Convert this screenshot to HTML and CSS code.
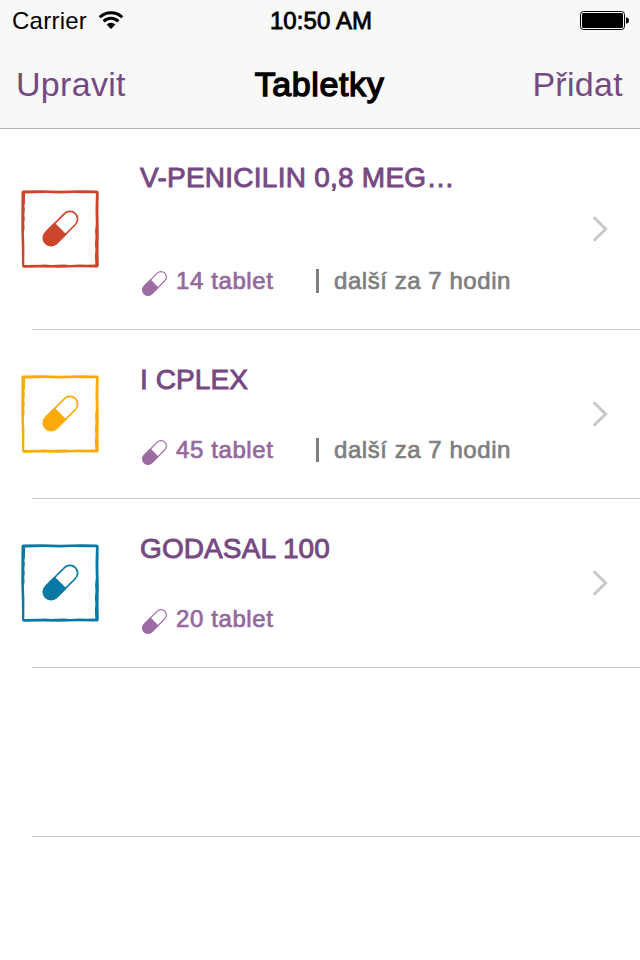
FILE: index.html
```html
<!DOCTYPE html>
<html lang="cs">
<head>
  <meta charset="UTF-8">
  <meta name="viewport" content="width=device-width, initial-scale=1.0">
  <title>Tabletky</title>
  <link rel="stylesheet" href="styles.css">
</head>
<body>
  <!-- shared icons -->
  <svg class="defs" width="0" height="0">
    <symbol id="pill" viewBox="0 0 40 40">
      <g transform="rotate(45 20 20)">
        <rect x="12.1" y="-1.6" width="15.8" height="43.2" rx="7.9" fill="none" stroke="currentColor" stroke-width="1.7"/>
        <path d="M11.3 20h17.4v13.5a8.7 8.7 0 0 1-17.4 0z" fill="currentColor"/>
      </g>
    </symbol>
    <symbol id="frame" viewBox="0 0 78 78">
      <path d="M.5 2.4Q.5 .5 2.5 .6L20 .3 39 .7 60 .3 75.5 .4Q77.8.4 77.7 3L77.4 22 77.8 42 77.5 60 77.8 75Q77.8 77.7 75 77.6L56 77.3 38 77.8 20 77.4 3 77.8Q.9 77.8 1 75L.8 56 .3 38 .4 20zM4.1 3.6L3.9 14 3.3 16 3.9 19 3.3 25 3.8 29 3.2 33 3.6 38 2.9 42 3.4 56 3.3 75 20 74.8 24 74.4 30 74.9 43 74.5 49 74.9 58 74.5 66 74.8 74.3 74.4 73.9 66 74.4 60 73.9 54 74.5 47 74.1 41 74.8 34 74.5 20 74.9 3.2 60 3.3 52 2.9 38 3.4 25 3.1z" fill="currentColor" fill-rule="evenodd"/>
    </symbol>
    <symbol id="chevron" viewBox="0 0 16 26">
      <path d="M1.7 1.3L13.6 13 1.7 24.7" fill="none" stroke="currentColor" stroke-width="3"/>
    </symbol>
  </svg>

  <div class="header">
    <div class="status">
      <div class="carrier">
        <span>Carrier</span>
        <svg class="wifi" width="26" height="20" viewBox="0 0 26 20">
          <g fill="none" stroke="#000" stroke-width="3">
            <path d="M1.7 7.3a16 16 0 0 1 22.6 0"/>
            <path d="M5.6 11.4a10.4 10.4 0 0 1 14.8 0"/>
          </g>
          <path d="M13 19l-4.4-4.4a6.2 6.2 0 0 1 8.8 0z"/>
        </svg>
      </div>
      <div class="time">10:50 AM</div>
      <svg class="battery" width="50" height="20" viewBox="0 0 50 20">
        <rect x=".5" y=".5" width="44" height="18" rx="3" fill="none" stroke="#000"/>
        <rect x="2" y="2" width="41" height="15" rx="1.5"/>
        <path d="M46 6.2q3 .6 3 3.3t-3 3.3z"/>
      </svg>
    </div>
    <div class="nav">
      <div class="nav-btn">Upravit</div>
      <div class="title">Tabletky</div>
      <div class="nav-btn right">Přidat</div>
    </div>
  </div>

  <div class="list">
    <div class="row tall">
      <div class="badge red">
        <svg class="frame"><use href="#frame"/></svg>
        <svg class="pill"><use href="#pill"/></svg>
      </div>
      <div class="info">
        <div class="name long">V-PENICILIN 0,8 MEG…</div>
        <div class="detail">
          <svg class="pill-small"><use href="#pill"/></svg>
          <span class="count">14 tablet</span>
          <span class="bar"></span>
          <span class="next">další za 7 hodin</span>
        </div>
      </div>
      <svg class="chevron"><use href="#chevron"/></svg>
    </div>

    <div class="row">
      <div class="badge yellow">
        <svg class="frame"><use href="#frame"/></svg>
        <svg class="pill"><use href="#pill"/></svg>
      </div>
      <div class="info">
        <div class="name">I CPLEX</div>
        <div class="detail">
          <svg class="pill-small"><use href="#pill"/></svg>
          <span class="count">45 tablet</span>
          <span class="bar"></span>
          <span class="next">další za 7 hodin</span>
        </div>
      </div>
      <svg class="chevron"><use href="#chevron"/></svg>
    </div>

    <div class="row">
      <div class="badge blue">
        <svg class="frame"><use href="#frame"/></svg>
        <svg class="pill"><use href="#pill"/></svg>
      </div>
      <div class="info">
        <div class="name">GODASAL 100</div>
        <div class="detail">
          <svg class="pill-small"><use href="#pill"/></svg>
          <span class="count">20 tablet</span>
        </div>
      </div>
      <svg class="chevron"><use href="#chevron"/></svg>
    </div>

    <div class="row"></div>
  </div>
</body>
</html>
```
FILE: styles.css
```css
* {
  box-sizing: border-box;
}
body {
  font-family: "Liberation Sans", Arial, sans-serif;
  margin: 0;
  width: 640px;
  height: 960px;
  background: #fff;
  overflow: hidden;
}
svg {
  display: block;
  flex: none;
}
.defs {
  position: absolute;
}
.header {
  height: 129px;
  background: #f8f8f8;
  border-bottom: 1px solid #b2b2b2;
}
.status, .nav {
  display: grid;
  grid-template-columns: 1fr auto 1fr;
  align-items: center;
}
.status {
  height: 40px;
  padding: 2px 10px 0 12px;
  font-size: 24px;
  line-height: 38px;
}
.carrier {
  display: flex;
  align-items: center;
  gap: 11px;
  letter-spacing: 0.25px;
}
.wifi {
  margin-top: -2px;
}
.time {
  letter-spacing: 0.1px;
  -webkit-text-stroke: 0.8px #000;
}
.battery {
  justify-self: end;
}
.nav {
  height: 88px;
  padding: 0 17px 0 16px;
  font-size: 34px;
}
.nav-btn {
  color: #764983;
  letter-spacing: 0.3px;
}
.right {
  text-align: right;
}
.title {
  letter-spacing: 0.6px;
  -webkit-text-stroke: 1.4px #000;
}
.row {
  display: flex;
  align-items: center;
  height: 169px;
  padding: 0 32px 2px 21px;
  background: linear-gradient(#c8c7cc, #c8c7cc) no-repeat 32px 100% / 608px 1px;
}
.row.tall {
  height: 201px;
}
.badge {
  display: grid;
  place-items: center;
  width: 78px;
  height: 78px;
}
.badge svg {
  grid-area: 1 / 1;
}
.frame {
  width: 78px;
  height: 78px;
}
.pill {
  width: 39px;
  height: 39px;
}
.red { color: #cb452b; }
.yellow { color: #fca90a; }
.blue { color: #0878a4; }
.info {
  display: flex;
  flex-direction: column;
  justify-content: space-between;
  align-self: stretch;
  flex: 1;
  margin-left: 41px;
  padding: 34px 0 31px;
}
.tall .info {
  padding-top: 33px;
}
.name {
  font-size: 28px;
  line-height: 32px;
  color: #764983;
  letter-spacing: 0.1px;
  -webkit-text-stroke: 0.9px #764983;
}
.name.long {
  letter-spacing: 0.25px;
}
.detail {
  display: flex;
  align-items: center;
  height: 32px;
  font-size: 24px;
  line-height: 32px;
  letter-spacing: 0.6px;
}
.pill-small {
  width: 27px;
  height: 27px;
  margin: 4px 8px 0 1px;
  color: #9d6ba3;
}
.count {
  width: 140px;
  color: #93699d;
  -webkit-text-stroke: 0.7px #93699d;
}
.bar {
  width: 3px;
  height: 24px;
  margin-right: 15px;
  background: #7f7f7f;
}
.next {
  color: #7f7f7f;
  letter-spacing: 0.55px;
  -webkit-text-stroke: 0.7px #7f7f7f;
}
.chevron {
  width: 16px;
  height: 26px;
  color: #c7c7cc;
}
```
